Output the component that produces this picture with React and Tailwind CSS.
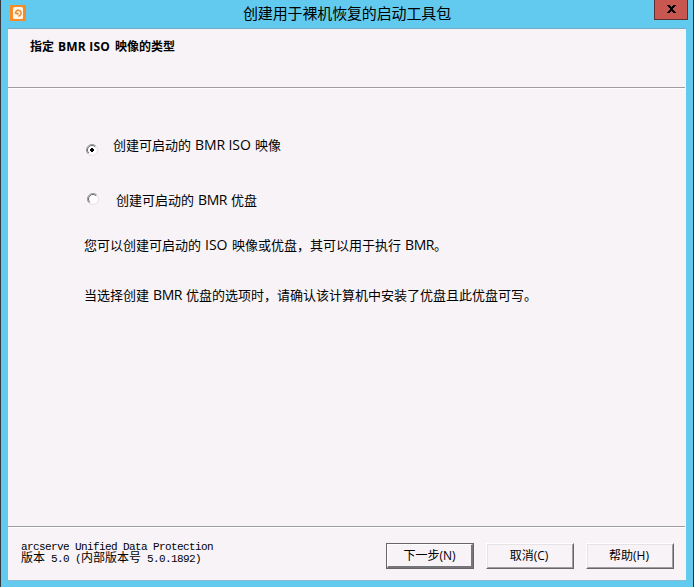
import React from "react";

function Latin({ className, children }) {
  return <span className={`inline-block whitespace-pre ${className}`}>{children}</span>;
}

function Divider() {
  return <div className="mb-px h-[2px] w-[677px] shrink-0 border-t border-[#a09da1] bg-white" />;
}

function Radio({ checked }) {
  return (
    <svg width="12" height="12" viewBox="0 0 12 12" className="block shrink-0" role="radio" aria-checked={checked}>
      <circle cx="6" cy="6" r="5" fill="#fff" />
      <path d="M2.1 9.9A5.5 5.5 0 0 1 9.9 2.1" fill="none" stroke="#98969a" strokeWidth="1" />
      <path d="M2.8 9.2A4.5 4.5 0 0 1 9.2 2.8" fill="none" stroke="#69676b" strokeWidth="1" />
      <path d="M9.9 2.1A5.5 5.5 0 0 1 2.1 9.9" fill="none" stroke="#e5e2e5" strokeWidth="1" />
      {checked && <path d="M5 4h2v1h1v2h-1v1h-2v-1h-1v-2h1z" fill="#000" shapeRendering="crispEdges" />}
    </svg>
  );
}

function Button({ focused, children }) {
  const frame = focused
    ? "border border-[#69666a]"
    : "border border-t-white border-l-white border-r-[#69666a] border-b-[#69666a]";
  const inner = focused
    ? "border-t border-l border-r-2 border-b-2 border-t-white border-l-white border-r-[#77747a] border-b-[#77747a]"
    : "border border-t-[#e6e3e6] border-l-[#e6e3e6] border-r-[#a09da1] border-b-[#a09da1] pr-[2px]";
  return (
    <button className={`h-[26px] w-[88px] bg-[#f7f3f7] ${frame}`}>
      <span className={`flex h-full w-full items-center justify-center whitespace-pre text-[12px] leading-none ${inner}`}>
        {children}
      </span>
    </button>
  );
}

export default function App() {
  return (
    <div className="flex h-[587px] w-[694px] flex-col overflow-hidden border-x border-l-[#333a40] border-r-[#17364a] bg-[#63caef] px-[7px] font-['Open_Sans','Noto_Sans_CJK_SC',sans-serif] text-black">
      <header className="flex h-7 shrink-0 items-start justify-between">
        <svg width="16" height="16" viewBox="0 0 16 16" className="mt-[5px] ml-[2px]">
          <path d="M0 0h16v16H0z" fill="#f68b27" />
          <rect x="3" y="2" width="10" height="12" rx="1.5" fill="#fff4e8" />
          <path d="M5.6 8.8A2.8 2.8 0 1 1 8.4 10.9M5.6 8.4L7.6 8.2L8.2 9.8" fill="none" stroke="#ef8a2c" strokeWidth="1.5" />
        </svg>
        <h1 className="mt-[3px] ml-[14px] text-[15px] leading-[20px] tracking-[-0.13px]">创建用于裸机恢复的启动工具包</h1>
        <button className="-mr-[2px] flex h-5 w-[34px] items-start justify-center border border-t-0 border-[#5b3032] bg-[#c75750] pt-[5px]">
          <svg width="9" height="8" viewBox="0 0 9 8" shapeRendering="crispEdges">
            <path d="M0 0h3v1h1v1h1v-1h1v-1h3v1h-1v1h-1v1h-1v2h1v1h1v1h1v1h-3v-1h-1v-1h-1v1h-1v1h-3v-1h1v-1h1v-1h1v-2h-1v-1h-1v-1h-1z" />
          </svg>
        </button>
      </header>
      <main className="flex h-[553px] w-[678px] flex-col border-t border-b border-t-[#75a9c5] border-b-[#86bbd1] bg-[#f7f3f7]">
        <div className="h-[58px] shrink-0 pt-[10px] pl-[22px]">
          <h2 className="flex whitespace-pre text-[12px] leading-[16px] font-bold">
            <span className="w-[28px]">指定</span>
            <Latin className="w-[57px] tracking-[0.22px]">BMR ISO</Latin>
            <span>映像的类型</span>
          </h2>
        </div>
        <Divider />
        <div className="h-[436px] shrink-0 pt-[45px] pl-[76px] text-[13px] leading-[20px]">
          <label className="flex h-[20px] items-start">
            <span className="mt-[9px] ml-[2px]"><Radio checked /></span>
            <span className="ml-[15px] whitespace-pre">创建可启动的<Latin className="w-[64px] pl-[4px] text-[14px] tracking-[-0.1px]">BMR ISO</Latin>映像</span>
          </label>
          <label className="mt-[35px] flex h-[20px] items-start">
            <span className="mt-[3px] ml-[3px]"><Radio /></span>
            <span className="ml-[17px] whitespace-pre">创建可启动的<Latin className="w-[37px] pl-[4px] text-[14px] tracking-[-0.4px]">BMR</Latin>优盘</span>
          </label>
          <p className="mt-[25px] h-[20px] whitespace-pre">您可以创建可启动的<Latin className="w-[31px] pl-[4px] text-[14px]">ISO</Latin>映像或优盘，其可以用于执行<Latin className="w-[33px] pl-[4px] text-[14px] tracking-[-0.4px]">BMR</Latin>。</p>
          <p className="mt-[30px] h-[20px] whitespace-pre">当选择创建<Latin className="w-[37px] pl-[4px] text-[14px] tracking-[-0.4px]">BMR</Latin>优盘的选项时，请确认该计算机中安装了优盘且此优盘可写。</p>
        </div>
        <Divider />
        <footer className="flex grow items-start justify-between pt-[14px] pr-[12px] pl-[13px]">
          <div className="-mt-[2px] font-['Liberation_Mono','Noto_Sans_CJK_SC',monospace] text-[11px] leading-[12px] tracking-[-0.6px] whitespace-pre">
            <p>arcserve Unified Data Protection</p>
            <p><span className="text-[12px] tracking-normal">版本</span> 5.0 (<span className="text-[12px] tracking-normal">内部版本号</span> 5.0.1892)</p>
          </div>
          <div className="flex gap-3">
            <Button focused>下一步(N)</Button>
            <Button>取消(C)</Button>
            <Button>帮助(H)</Button>
          </div>
        </footer>
      </main>
    </div>
  );
}
